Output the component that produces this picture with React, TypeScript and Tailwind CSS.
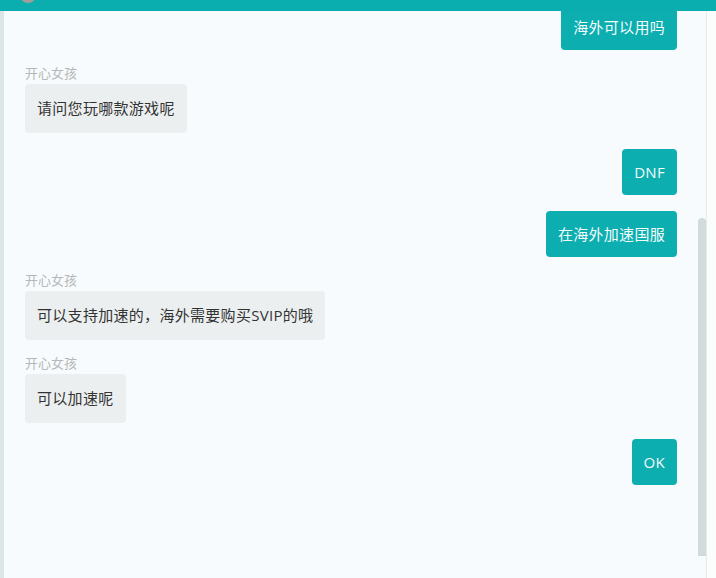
import React from 'react';

type Msg = { from: 'me' | 'them'; text: string };

const messages: Msg[] = [
  { from: 'me', text: '海外可以用吗' },
  { from: 'them', text: '请问您玩哪款游戏呢' },
  { from: 'me', text: 'DNF' },
  { from: 'me', text: '在海外加速国服' },
  { from: 'them', text: '可以支持加速的，海外需要购买SVIP的哦' },
  { from: 'them', text: '可以加速呢' },
  { from: 'me', text: 'OK' },
];

const font = { fontFamily: '"Open Sans", "Noto Sans CJK SC", sans-serif' };

function Bubble({ msg }: { msg: Msg }) {
  if (msg.from === 'me') {
    return (
      <div className="flex justify-end">
        <div className="bg-[#0daeb0] text-[#f4fbfb] text-[15px] tracking-[0.3px] leading-[24px] px-3 py-[11px] rounded">
          {msg.text}
        </div>
      </div>
    );
  }
  return (
    <div className="flex flex-col items-start">
      <div className="text-[13px] leading-[14px] pb-[4px] text-[#b5b8b8]">开心女孩</div>
      <div className="bg-[#eceff0] text-[#333] text-[15px] tracking-[0.3px] leading-[25px] px-3 py-3 rounded">
        {msg.text}
      </div>
    </div>
  );
}

export default function App() {
  return (
    <div className="w-[716px] h-[578px] overflow-hidden flex flex-col bg-[#f7fbfd]" style={font}>
      {/* top bar, avatar cut off */}
      <div className="h-[11px] shrink-0 bg-[#0aaeae] overflow-hidden flex items-end pl-[20px]">
        <div className="w-[16px] h-[16px] shrink-0 rounded-full bg-[#a39c97] mb-[8px]" />
      </div>

      <div className="flex flex-1 min-h-0">
        <div className="w-[4px] shrink-0 bg-[#dde6e7]" />

        {/* messages */}
        <div className="w-[694px] shrink-0 overflow-hidden pl-[21px] pr-[21px]">
          <div className="flex flex-col gap-4 -mt-[7px]">
            {messages.map((m, i) => (
              <Bubble key={i} msg={m} />
            ))}
          </div>
        </div>

        {/* scrollbar */}
        <div className="w-[8px] shrink-0 flex flex-col">
          <div className="mt-[207px] h-[338px] bg-[#d2dbdc] rounded-t-sm" />
        </div>
        <div className="w-px shrink-0 bg-[#e6eced]" />
        <div className="flex-1 bg-[#fbfdfd]" />
      </div>
    </div>
  );
}
